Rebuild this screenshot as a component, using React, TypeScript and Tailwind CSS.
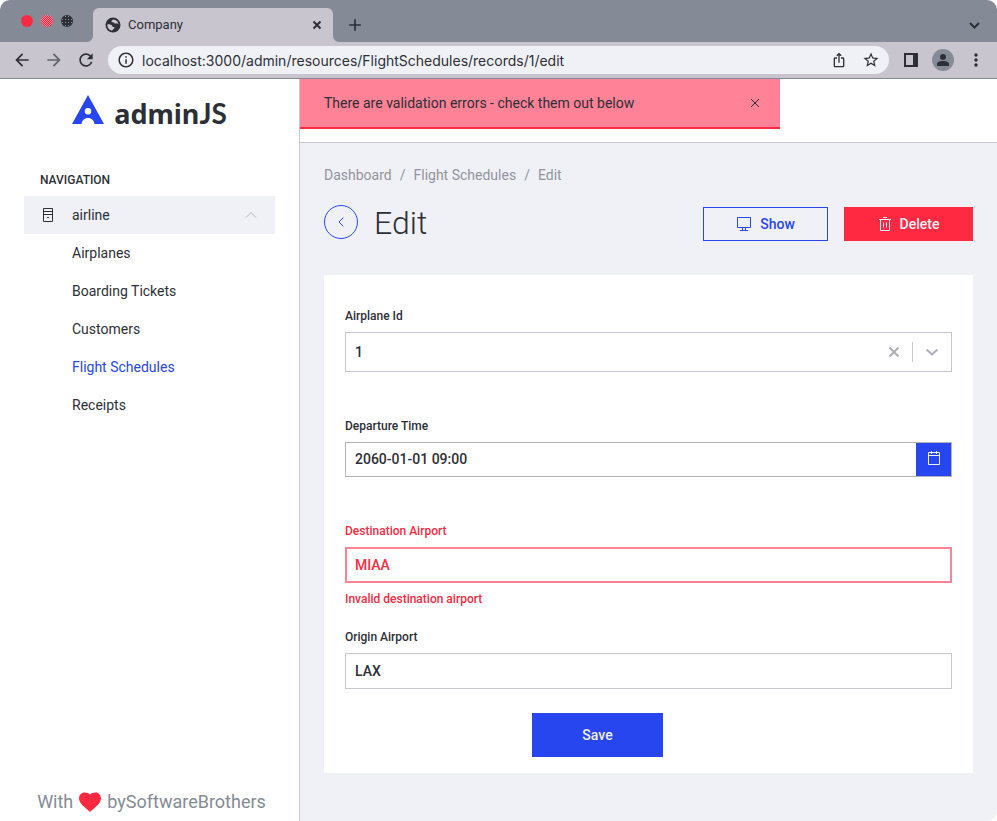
import type { ReactNode } from 'react';
import {
  MdAdd,
  MdArrowBack,
  MdArrowForward,
  MdInfoOutline,
  MdIosShare,
  MdMoreVert,
  MdRefresh,
  MdStarBorder,
} from 'react-icons/md';

const resources = ['Airplanes', 'Boarding Tickets', 'Customers', 'Flight Schedules', 'Receipts'];

function TabFlare({ side }: { side: 'left' | 'right' }) {
  return (
    <svg width="6" height="6" viewBox="0 0 6 6" className="self-end fill-[#c8c5cf]" aria-hidden="true">
      <path d={side === 'left' ? 'M6 0v6H0A6 6 0 0 0 6 0Z' : 'M0 0v6h6A6 6 0 0 1 0 0Z'} />
    </svg>
  );
}

function TabStrip() {
  return (
    <div className="flex h-[42px] items-center bg-[#858b96]">
      <div className="ml-[21px] flex gap-2" aria-hidden="true">
        <span className="size-3 rounded-full bg-[#ff2a42]" />
        <span className="size-3 rounded-full bg-[repeating-conic-gradient(#ff2a42_0_25%,#ff8296_0_50%)] bg-[length:2px_2px]" />
        <span className="size-3 rounded-full bg-[radial-gradient(#858b96_20%,#2d2f36_40%)] bg-[length:3px_3px]" />
      </div>
      <div className="ml-[14px] flex h-full">
        <TabFlare side="left" />
        <div className="mt-2 flex w-60 items-center rounded-t-md bg-[#c8c5cf] pr-[11px] pl-3">
          <svg width="16" height="16" viewBox="0 0 16 16" aria-hidden="true">
            <circle cx="8" cy="8" r="7.500" className="fill-[#2d2f36]" />
            <path
              className="fill-[#c8c5cf]"
              d="M8.500 2.500c-1 .4-2 .8-2 1.700 0 1 1.100 1 1.800 1.100.8.100.6 1 1.400 1.200 1 .3 1.600-.5 2.600-.1.600.2 1 .6 1.200 1.100C13.300 4.800 11.300 2.700 8.500 2.500ZM2.300 7.500c1.300-.3 3-.2 4.200.4.900.5.500 1.500 1.400 1.900.9.300 1.600.2 1.600 1 0 .9-1.100 1-1.500 1.700-.3.400-.4.800-.7 1.100C4.400 13.400 2.200 11 2.300 7.500Z"
            />
          </svg>
          <span className="ml-[7px] flex-1 text-[13px]">Company</span>
          <button aria-label="Close tab">
            <svg width="10" height="10" viewBox="0 0 10 10" className="fill-none stroke-current stroke-2">
              <path d="m1.500 1.500 7 7M8.500 1.500l-7 7" />
            </svg>
          </button>
        </div>
        <TabFlare side="right" />
      </div>
      <button aria-label="New tab" className="mt-2 ml-[6px]">
        <MdAdd className="size-5" />
      </button>
      <button aria-label="Search tabs" className="mt-2 mr-[17px] ml-auto">
        <svg width="11" height="7" viewBox="0 0 11 7" className="fill-none stroke-current stroke-2">
          <path d="m1 1 4.500 4.500L10 1" />
        </svg>
      </button>
    </div>
  );
}

function Toolbar() {
  return (
    <div className="flex h-[37px] items-center border-b border-[#858b96] bg-[#c8c5cf] pr-[11px] pl-3">
      <button aria-label="Back">
        <MdArrowBack className="size-5" />
      </button>
      <button aria-label="Forward" className="ml-3 text-[#5e626c]">
        <MdArrowForward className="size-5" />
      </button>
      <button aria-label="Reload" className="ml-3">
        <MdRefresh className="size-5" />
      </button>
      <div className="ml-3 flex h-7 flex-1 items-center rounded-full bg-[#f0f1f7] px-[9px]">
        <MdInfoOutline className="size-[18px]" />
        <input
          aria-label="Address"
          className="ml-[7px] min-w-0 flex-1 bg-transparent font-[Inter,sans-serif] text-[14px] outline-none"
          defaultValue="localhost:3000/admin/resources/FlightSchedules/records/1/edit"
        />
        <button aria-label="Share">
          <MdIosShare className="size-4" />
        </button>
        <button aria-label="Bookmark" className="ml-[15px]">
          <MdStarBorder className="size-[18px]" />
        </button>
      </div>
      <button aria-label="Side panel" className="ml-[15px]">
        <svg width="14" height="14" viewBox="0 0 14 14" className="fill-current">
          <path fillRule="evenodd" d="M0 0h14v14H0zM2 2v10h7V2z" />
        </svg>
      </button>
      <button aria-label="Profile" className="ml-[14px] flex size-[22px] items-center justify-center rounded-full bg-[#858b96]">
        <svg width="12" height="12" viewBox="0 0 12 12" className="fill-current">
          <circle cx="6" cy="3" r="3" />
          <path d="M0 12v-2c0-2 2.500-3 6-3s6 1 6 3v2z" />
        </svg>
      </button>
      <button aria-label="Menu" className="ml-3">
        <MdMoreVert className="size-5" />
      </button>
    </div>
  );
}

function Sidebar() {
  return (
    <aside className="flex w-[300px] shrink-0 flex-col border-r border-[#c8c5cf] bg-white">
      <a href="#home" className="mt-4 flex h-8 items-start justify-center gap-[10px]">
        <svg width="32" height="29" viewBox="0 0 32 29" className="fill-[#2846f0]" aria-hidden="true">
          <path
            fillRule="evenodd"
            d="M16 0 32 29H22.500C22 25.500 19.500 23 16 23s-6 2.500-6.500 6H0ZM16 13a3.200 3.200 0 1 0 0 6.400A3.200 3.200 0 0 0 16 13Z"
          />
        </svg>
        <span className="font-['Noto_Sans','Open_Sans',sans-serif] text-[27px] leading-9 font-bold">
          admin<span className="font-[Lato,sans-serif] text-[28px]">JS</span>
        </span>
      </a>
      <nav className="mt-[45px] px-6 text-[14px]">
        <h2 className="px-4 text-[12px] leading-4 font-medium">NAVIGATION</h2>
        <button className="mt-2 flex h-[38px] w-full items-center bg-[#f0f1f7] px-[18px] text-left">
          <svg width="12" height="14" viewBox="0 0 12 14" className="fill-none stroke-current" aria-hidden="true">
            <path d="M1.500.5h9v13h-9zM1.500 3.500h9M1.500 6.500h9" />
            <path d="M5 9.500h2" />
          </svg>
          <span className="ml-[18px] flex-1">airline</span>
          <svg width="12" height="8" viewBox="0 0 12 8" className="fill-none stroke-[#b4b3bc]" aria-hidden="true">
            <path d="m1 6.500 5-5 5 5" />
          </svg>
        </button>
        <ul>
          {resources.map((name) => (
            <li key={name}>
              <a
                href="#resource"
                className={
                  name === 'Flight Schedules'
                    ? 'flex h-[38px] items-center pl-12 text-[#2846f0]'
                    : 'flex h-[38px] items-center pl-12'
                }
              >
                {name}
              </a>
            </li>
          ))}
        </ul>
      </nav>
      <footer className="mt-auto mb-[7px] flex items-center justify-center gap-[5px] pl-1 text-[18px] leading-6 text-[#858b96]">
        With
        <svg width="24" height="20" viewBox="0 0 24 20" className="fill-[#ff2a42]" role="img" aria-label="love">
          <path d="M12 20C8 16 1 11.500 1 6.500 1 3 3.500.5 6.500.5 9 .5 11 1.200 12 2.500 13 1.200 15 .5 17.500.5c3 0 5.500 2.500 5.500 6C23 11.500 16 16 12 20Z" />
        </svg>
        bySoftwareBrothers
      </footer>
    </aside>
  );
}

function Field({ id, label, error, children }: { id: string; label: string; error?: string; children: ReactNode }) {
  return (
    <div className={error ? 'mb-[22px] text-[#ff2a42]' : 'mb-[46px] last-of-type:mb-6'}>
      <label htmlFor={id} className="mb-2 block text-[12px] leading-4 font-medium">
        {label}
      </label>
      {children}
      {error && <p className="mt-2 text-[12px] leading-4 font-medium">{error}</p>}
    </div>
  );
}

function EditForm() {
  return (
    <form className="mt-[34px] bg-white px-[21px] pt-[33px] pb-4">
      <Field id="airplane" label="Airplane Id">
        <div className="flex h-10 items-center border border-[#c8c5cf] pr-3">
          <select id="airplane" className="h-full flex-1 appearance-none bg-transparent pl-[9px] text-[14px] font-medium outline-none">
            <option>1</option>
          </select>
          <button type="button" aria-label="Clear" className="px-3">
            <svg width="12" height="12" viewBox="0 0 12 12" className="fill-none stroke-[#aeadb7] stroke-2">
              <path d="m1.500 1.500 9 9M10.500 1.500l-9 9" />
            </svg>
          </button>
          <span className="h-5 w-px bg-[#c8c5cf]" />
          <svg width="14" height="8" viewBox="0 0 14 8" className="ml-3 fill-none stroke-[#aeadb7] stroke-2" aria-hidden="true">
            <path d="m1.500 1.500 5.500 5 5.500-5" />
          </svg>
        </div>
      </Field>
      <Field id="departure" label="Departure Time">
        <div className="flex h-[35px] border border-[#b4b3bc]">
          <input
            id="departure"
            className="min-w-0 flex-1 px-[9px] text-[14px] font-medium outline-none"
            defaultValue="2060-01-01 09:00"
          />
          <button type="button" aria-label="Pick a date" className="flex w-[35px] items-center justify-center bg-[#2846f0] pb-[3px]">
            <svg width="12" height="14" viewBox="0 0 12 14" className="fill-none stroke-[#f0f1f7]">
              <path d="M.5 1.500h11v12H.5zM.5 4.500h11M3.500 0v3M8.500 0v3" />
            </svg>
          </button>
        </div>
      </Field>
      <Field id="destination" label="Destination Airport" error="Invalid destination airport">
        <input
          id="destination"
          aria-invalid="true"
          className="block h-9 w-full border-2 border-[#ff8296] px-2 text-[14px] font-medium outline-none"
          defaultValue="MIAA"
        />
      </Field>
      <Field id="origin" label="Origin Airport">
        <input
          id="origin"
          className="block h-9 w-full border border-[#c8c5cf] px-[9px] text-[14px] font-medium outline-none"
          defaultValue="LAX"
        />
      </Field>
      <button type="submit" className="ml-[187px] block h-11 w-[131px] bg-[#2846f0] text-[14px] font-medium text-[#f0f1f7]">
        Save
      </button>
    </form>
  );
}

function Content() {
  return (
    <main className="relative min-w-0 flex-1">
      <div className="h-16 border-b border-[#c8c5cf] bg-white" />
      <div
        role="alert"
        className="absolute top-0 left-0 flex h-[50px] w-[480px] items-center justify-between border-b-2 border-[#ff2a42] bg-[#ff8296] pr-4 pl-6"
      >
        <span className="text-[14px]">There are validation errors - check them out below</span>
        <button aria-label="Dismiss" className="p-1">
          <svg width="10" height="10" viewBox="0 0 10 10" className="fill-none stroke-current">
            <path d="m1 1 8 8M9 1 1 9" />
          </svg>
        </button>
      </div>
      <div className="px-6 pt-6 pb-12">
        <nav aria-label="Breadcrumb" className="flex gap-2 text-[14px] leading-4 text-[#92949e]">
          <a href="#dashboard">Dashboard</a>
          <span>/</span>
          <a href="#flights">Flight Schedules</a>
          <span>/</span>
          <a href="#edit">Edit</a>
        </nav>
        <div className="mt-[22px] flex h-9 items-start">
          <a
            href="#back"
            aria-label="Back to list"
            className="flex size-[34px] items-center justify-center rounded-full border border-[#2846f0] text-[#2846f0]"
          >
            <svg width="6" height="10" viewBox="0 0 6 10" className="fill-none stroke-current">
              <path d="M5.300.7 1 5l4.300 4.300" />
            </svg>
          </a>
          <h1 className="ml-4 text-[32px] leading-9 font-light">Edit</h1>
          <div className="ml-auto flex gap-4 self-end text-[14px] font-medium">
            <button className="flex h-[34px] w-[125px] items-center justify-center gap-2 border border-[#2846f0] text-[#2846f0]">
              <svg width="16" height="14" viewBox="0 0 16 14" className="fill-none stroke-current">
                <path d="M1.500.5h13v10h-13zM6.500 10.500v3M9.500 10.500v3M4 13.500h8" />
              </svg>
              Show
            </button>
            <button className="flex h-[34px] w-[129px] items-center justify-center gap-2 bg-[#ff2a42] text-[#f0f1f7]">
              <svg width="14" height="14" viewBox="0 0 14 14" className="fill-none stroke-current">
                <path d="M5 .5h4M1 2.500h12M2.500 2.500v11h9v-11M5.500 5.500v5M8.500 5.500v5" />
              </svg>
              Delete
            </button>
          </div>
        </div>
        <EditForm />
      </div>
    </main>
  );
}

export default function App() {
  return (
    <div className="min-h-screen bg-white font-[Roboto,sans-serif] text-[#2d2f36]">
      <div className="flex min-h-screen flex-col overflow-hidden rounded-t-[10px] rounded-br-[10px] bg-[#f0f1f7]">
        <header>
          <TabStrip />
          <Toolbar />
        </header>
        <div className="flex flex-1">
          <Sidebar />
          <Content />
        </div>
      </div>
    </div>
  );
}
